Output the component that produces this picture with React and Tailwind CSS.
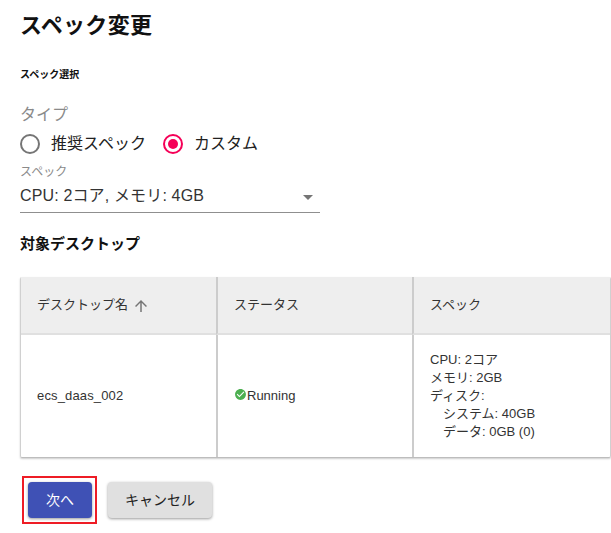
const FONT = "font-['Liberation_Sans','Noto_Sans_CJK_JP',sans-serif]";

function Radio({ checked, label }) {
  return (
    <label className="flex items-center gap-[11px]">
      {checked ? (
        <svg width="20" height="20" viewBox="0 0 20 20">
          <circle cx="10" cy="10" r="9" fill="none" stroke="#f50057" strokeWidth="2" />
          <circle cx="10" cy="10" r="5" fill="#f50057" />
        </svg>
      ) : (
        <svg width="20" height="20" viewBox="0 0 20 20">
          <circle cx="10" cy="10" r="9" fill="none" stroke="#757575" strokeWidth="2" />
        </svg>
      )}
      <span className="text-base leading-6 text-[#212121]">{label}</span>
    </label>
  );
}

export default function App() {
  return (
    <div className={`${FONT} h-[533px] w-[611px] overflow-hidden bg-white text-[#212121]`}>
      <div className="pl-5">
        <h1 className="pt-[10px] text-[22px] leading-[32px] font-bold tracking-[0.3px] text-[#111]">スペック変更</h1>
        <h2 className="mt-[25px] text-[10px] leading-[16px] font-bold text-[#111]">スペック選択</h2>

        <div className="mt-[20px] text-base leading-6 text-[#8a8a8a]">タイプ</div>
        <div className="mt-[5px] flex gap-[17px]">
          <Radio label="推奨スペック" />
          <Radio checked label="カスタム" />
        </div>

        <div className="mt-[8px] w-[300px]">
          <div className="text-xs leading-[16px] text-[#8a8a8a]">スペック</div>
          <div className="flex h-[33px] items-center justify-between border-b border-[#8f8f8f] pb-px">
            <span className="text-base tracking-[0.15px] text-[#333]">CPU: 2コア, メモリ: 4GB</span>
            <svg className="mr-[7px] mt-[3px]" width="10" height="5" viewBox="0 0 10 5">
              <path d="M0 0 L10 0 L5 5 Z" fill="#757575" />
            </svg>
          </div>
        </div>

        <h2 className="mt-[20px] text-[15px] leading-[22px] font-bold text-[#111]">対象デスクトップ</h2>

        <div className="mt-[22px] grid h-[181px] w-[591px] grid-cols-[195px_196px_1fr] grid-rows-[58px_1fr] rounded-[2px] border-x border-b border-b-[#bdbdbd] border-x-[#d0d0d0] text-[13px] text-[#333] shadow-[0_1px_2px_rgba(0,0,0,0.2)]">
          <div className="flex items-center gap-[4px] border-b-2 border-[#e0e0e0] bg-[#eeeeee] pl-4">
            デスクトップ名
            <svg width="18" height="18" viewBox="0 0 24 24" className="mt-[1px]">
              <path d="M4 12l1.41 1.41L11 7.83V20h2V7.83l5.58 5.59L20 12l-8-8-8 8z" fill="#757575" />
            </svg>
          </div>
          <div className="flex items-center border-b-2 border-l-2 border-b-[#e0e0e0] border-l-[#cccccc] bg-[#eeeeee] pl-4">ステータス</div>
          <div className="flex items-center border-b-2 border-l-2 border-b-[#e0e0e0] border-l-[#cccccc] bg-[#eeeeee] pl-4">スペック</div>

          <div className="flex items-center pb-px pl-4 tracking-[0.15px]">ecs_daas_002</div>
          <div className="flex items-center border-l-2 border-[#cccccc] pb-px pl-4">
            <svg width="13" height="13" viewBox="0 0 24 24" className="mb-[3px]">
              <path d="M12 2C6.48 2 2 6.48 2 12s4.48 10 10 10 10-4.48 10-10S17.52 2 12 2zm-2 15l-5-5 1.41-1.41L10 14.17l7.59-7.59L19 8l-9 9z" fill="#4caf50" />
            </svg>
            <span>Running</span>
          </div>
          <div className="flex flex-col justify-center border-l-2 border-[#cccccc] pb-px pl-4 leading-[18px]">
            <div>CPU: 2コア</div>
            <div>メモリ: 2GB</div>
            <div>ディスク:</div>
            <div className="pl-[13px]">システム: 40GB</div>
            <div className="pl-[13px]">データ: 0GB (0)</div>
          </div>
        </div>

        <div className="mt-[18px] ml-[2px] flex items-center gap-[11px]">
          <div className="border-2 border-[#ee1c25] py-[4px] pr-[3px] pl-[4px]">
            <button className="flex h-9 w-16 items-center justify-center rounded bg-[#3f51b5] text-sm text-white shadow-[0_1px_3px_rgba(0,0,0,0.4)]">次へ</button>
          </div>
          <button className="flex h-9 w-[104px] items-center justify-center rounded bg-[#e0e0e0] text-sm text-[#212121] shadow-[0_1px_3px_rgba(0,0,0,0.4)]">キャンセル</button>
        </div>
      </div>
    </div>
  );
}
